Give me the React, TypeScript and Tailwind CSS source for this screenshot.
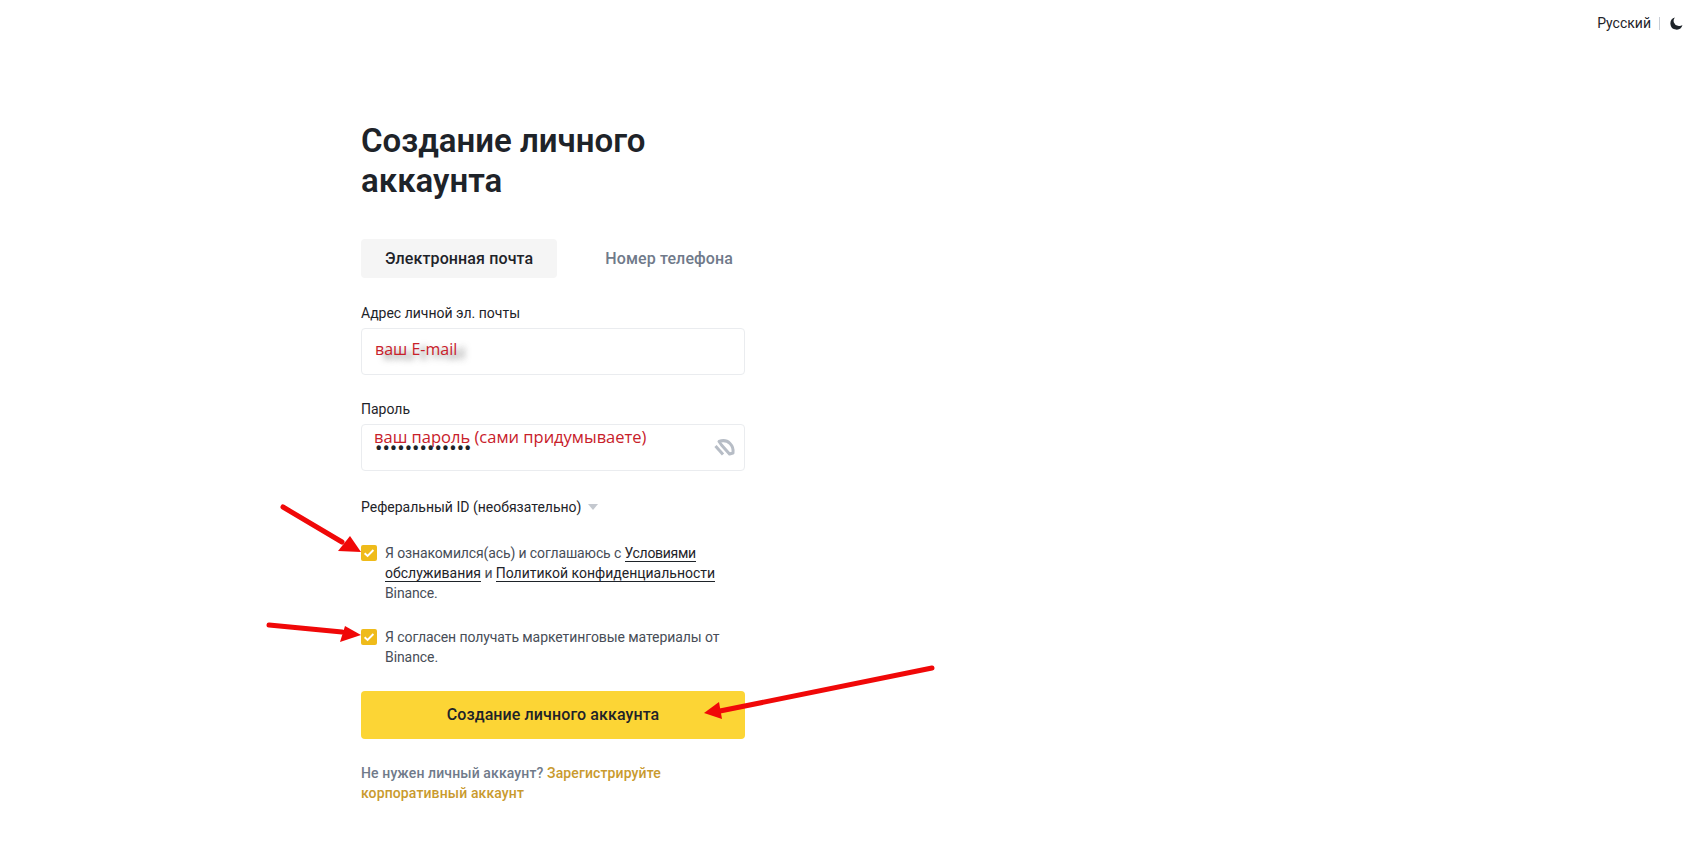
import React from "react";

const font = { fontFamily: '"Roboto", "Noto Sans", sans-serif' };

function Check() {
  return (
    <span className="mt-[2px] flex h-4 w-4 shrink-0 items-center justify-center rounded-[2px] bg-[#efbb1a]">
      <svg width="14" height="14" viewBox="0 0 14 14" fill="none">
        <path d="M2.6 7.2 5.6 10 11.4 4" stroke="#fff" strokeWidth="1.9" />
      </svg>
    </span>
  );
}

function Field({ label, children }: { label: string; children: React.ReactNode }) {
  return (
    <div className="flex flex-col">
      <label className="mb-[4px] text-[14px] leading-[22px] text-[#1e2329]">{label}</label>
      <div className="relative h-[47px] rounded-[4px] border border-[#eaecef]">{children}</div>
    </div>
  );
}

export default function App() {
  return (
    <div className="relative h-[847px] overflow-hidden bg-white" style={font}>
      <header className="flex h-[46px] items-center justify-end pr-[10px]">
        <span className="text-[14px] text-[#1e2329]">Русский</span>
        <span className="mx-[8px] h-[13px] w-px bg-[#c9ced6]" />
        <svg className="ml-[2px]" width="13" height="13" viewBox="0 0 14 14">
          <path d="M5.4 .6a6.6 6.6 0 1 0 8 8.1A5.4 5.4 0 0 1 8.5 9.4 5.2 5.2 0 0 1 5.4 .6Z" fill="#1e2329" />
        </svg>
      </header>

      <main className="ml-[361px] w-[384px] pt-[75px]">
        <h1 className="text-[33px] font-semibold leading-[40px] text-[#1e2329]">Создание личного аккаунта</h1>

        <div className="mt-[38px] flex gap-[24px]">
          <button className="h-[39px] whitespace-nowrap rounded-[4px] bg-[#f5f5f5] px-[24px] text-[16px] font-medium tracking-[0.12px] text-[#1e2329]">Электронная почта</button>
          <button className="h-[39px] whitespace-nowrap px-[24px] text-[16px] font-medium tracking-[0.12px] text-[#707a8a]">Номер телефона</button>
        </div>

        <div className="mt-[24px] flex flex-col gap-[23px]">
          <Field label="Адрес личной эл. почты">
            <span
              className="absolute left-[13px] top-[8px] text-[16px] leading-[24px] text-[#c8202a] [text-shadow:8px_4px_6px_rgba(50,50,50,0.6)]"
              style={{ fontFamily: '"Open Sans", sans-serif' }}
            >
              ваш E-mail
            </span>
          </Field>
          <Field label="Пароль">
            <span className="absolute left-[13px] top-[12px] text-[22px] leading-[24px] text-[#1e2329]">•••••••••••••</span>
            <span
              className="absolute left-[12px] top-0 text-[16.5px] leading-[24px] text-[#c8202a]"
              style={{ fontFamily: '"Open Sans", sans-serif' }}
            >
              ваш пароль (сами придумываете)
            </span>
            <svg className="absolute right-[7px] top-[11px]" width="24" height="24" viewBox="0 0 24 24" fill="none">
              <path d="M6 5.5C10 4 14 4.5 17 7.5 19.5 10 20.5 13.5 20 17L16.5 18 8.5 9Z" stroke="#b7bdc6" strokeWidth="3" strokeLinejoin="round" />
              <path d="M2.5 10 10 18.5" stroke="#b7bdc6" strokeWidth="3" />
            </svg>
          </Field>
        </div>

        <div className="mt-[25px] flex items-center gap-[6px] text-[14px] leading-[22px] text-[#1e2329]">
          Реферальный ID (необязательно)
          <svg width="12" height="8" viewBox="0 0 12 8"><path d="M1 1h10L6 7Z" fill="#c4c8cf" /></svg>
        </div>

        <div className="mt-[25px] flex gap-[8px] text-[14px] leading-[20px] tracking-[-0.12px] text-[#474d57]">
          <Check />
          <p>
            Я ознакомился(ась) и соглашаюсь с <span className="border-b border-[#1e2329] tracking-[-0.3px] text-[#1e2329]">Условиями</span>{" "}
            <span className="border-b border-[#1e2329] tracking-normal text-[#1e2329]">обслуживания</span> и{" "}
            <span className="border-b border-[#1e2329] tracking-normal text-[#1e2329]">Политикой конфиденциальности</span> Binance.
          </p>
        </div>
        <div className="mt-[24px] flex gap-[8px] text-[14px] leading-[20px] tracking-[-0.08px] text-[#474d57]">
          <Check />
          <p>Я согласен получать маркетинговые материалы от Binance.</p>
        </div>

        <button className="mt-[24px] h-[48px] w-full rounded-[4px] bg-[#fcd535] text-[16px] font-medium tracking-[0.1px] text-[#1e2329]">Создание личного аккаунта</button>

        <p className="mt-[24px] w-[340px] text-[14px] font-medium leading-[20px] tracking-[0.12px] text-[#707a8a]">
          Не нужен личный аккаунт? <span className="text-[#c99a2e]">Зарегистрируйте корпоративный аккаунт</span>
        </p>
      </main>

      <svg className="pointer-events-none absolute left-0 top-0" width="1693" height="847" fill="none">
        <path d="M283 507 342 542" stroke="#f00808" strokeWidth="5" strokeLinecap="round" />
        <path d="M361 552 338 551 350 536Z" fill="#f00808" />
        <path d="M269 625 342 632" stroke="#f00808" strokeWidth="5" strokeLinecap="round" />
        <path d="M361 635 340 642 345 626Z" fill="#f00808" />
        <path d="M932 668 720 711" stroke="#f00808" strokeWidth="5" strokeLinecap="round" />
        <path d="M704 713 719 702 722 719Z" fill="#f00808" />
      </svg>
    </div>
  );
}
